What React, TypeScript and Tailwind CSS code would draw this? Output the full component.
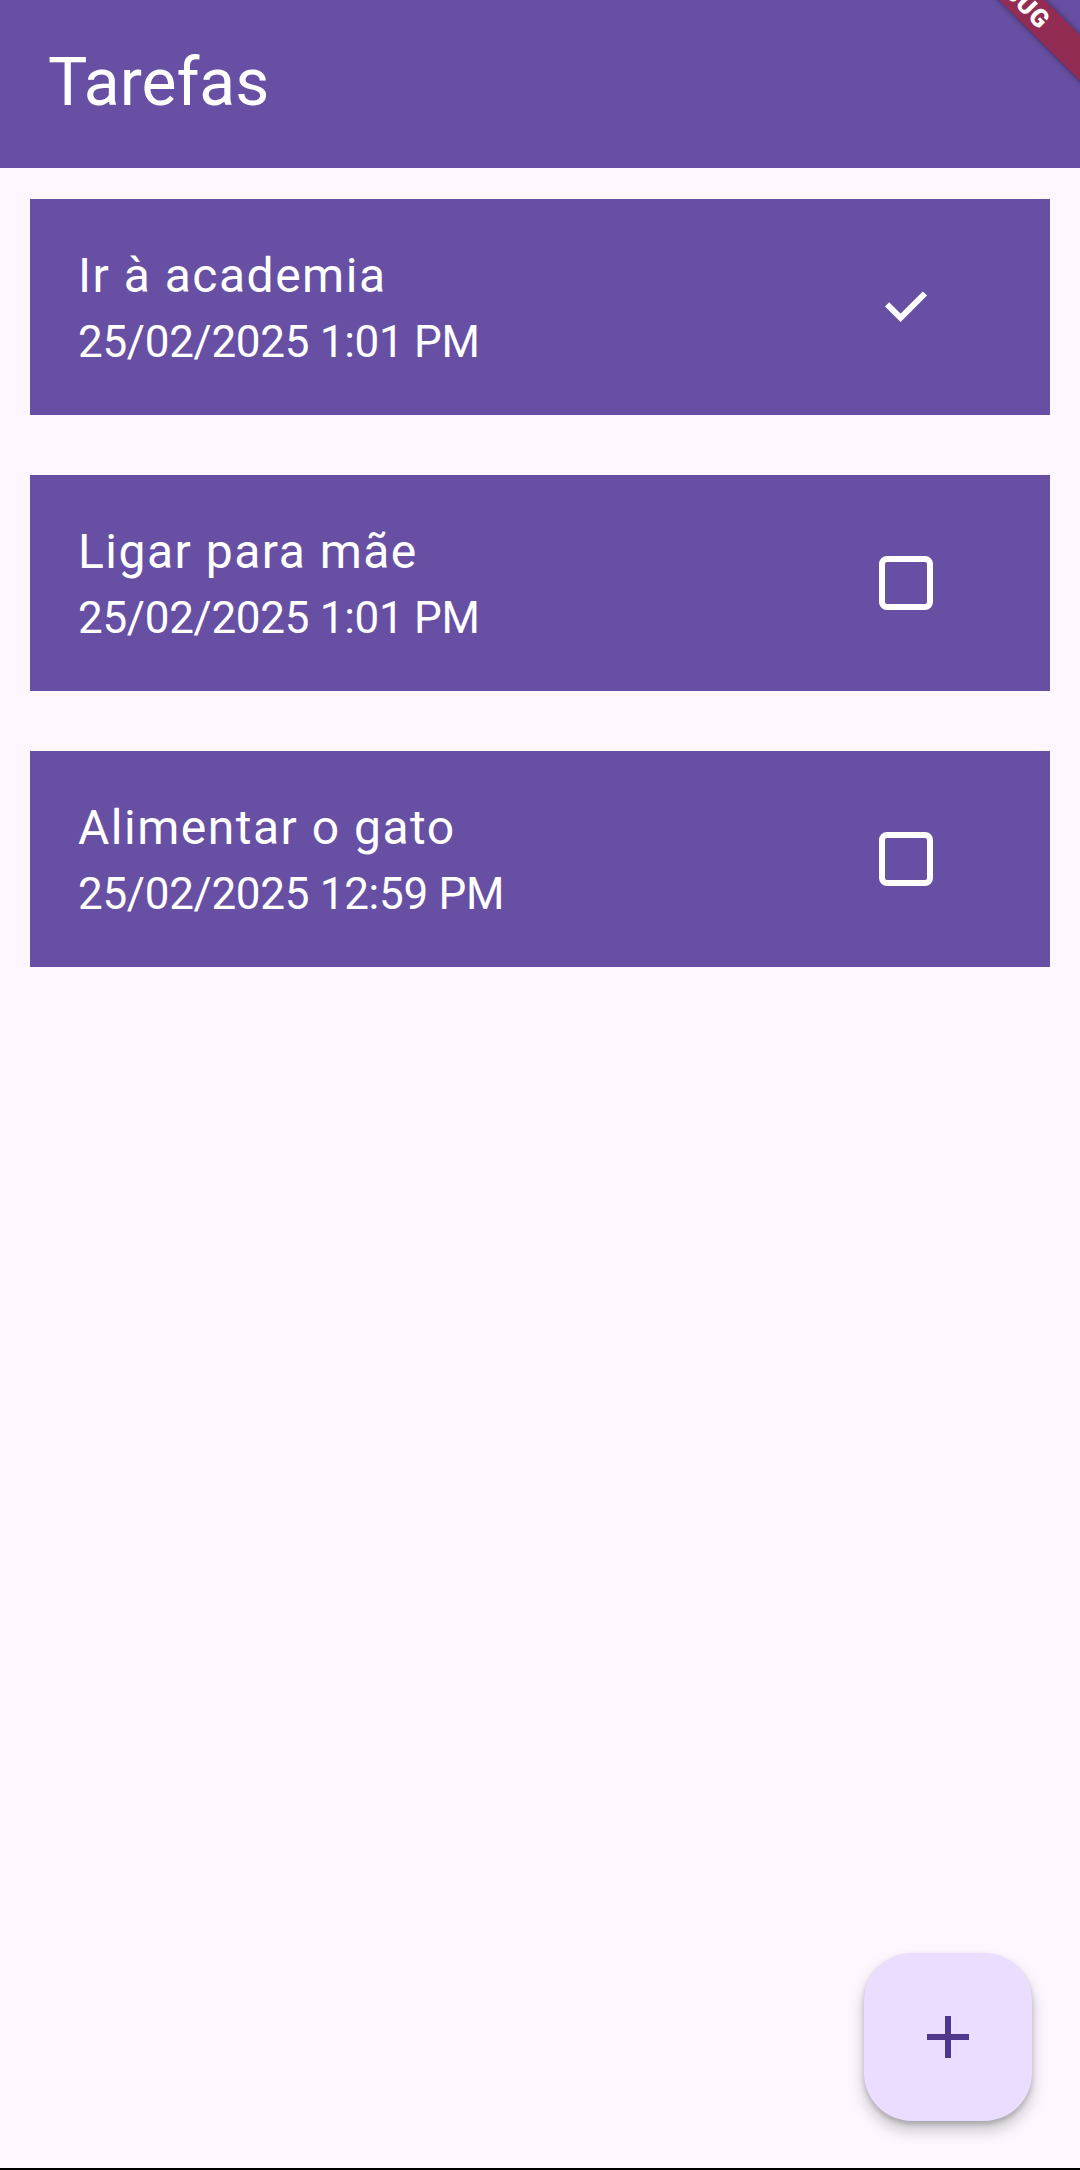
import { useState } from "react";

type Task = { title: string; date: string; done: boolean };

const initialTasks: Task[] = [
  { title: "Ir à academia", date: "25/02/2025 1:01 PM", done: true },
  { title: "Ligar para mãe", date: "25/02/2025 1:01 PM", done: false },
  { title: "Alimentar o gato", date: "25/02/2025 12:59 PM", done: false },
];

function CheckBox({ checked }: { checked: boolean }) {
  if (checked) {
    return (
      <svg width="54" height="54" viewBox="0 0 54 54" className="block">
        <polyline
          points="8.1,24.3 21.6,37.8 45.9,13.5"
          fill="none"
          stroke="white"
          strokeWidth="6"
        />
      </svg>
    );
  }
  return <div className="w-[54px] h-[54px] rounded-[8px] border-[6px] border-white" />;
}

export default function App() {
  const [tasks, setTasks] = useState(initialTasks);

  const toggle = (i: number) =>
    setTasks((t) => t.map((task, idx) => (idx === i ? { ...task, done: !task.done } : task)));

  return (
    <div
      className="relative w-full h-[2170px] flex flex-col bg-[#FEF7FF]"
      style={{ fontFamily: "Roboto, 'Noto Sans', sans-serif" }}
    >
      <header className="relative h-[168px] shrink-0 bg-[#6750A4] overflow-hidden flex items-center pl-[48px] pb-[2px]">
        <h1 className="text-white text-[66px] font-normal leading-none">Tarefas</h1>
        {/* debug banner */}
        <div className="absolute left-[816px] top-[-22px] w-[400px] h-[32px] rotate-45 bg-[rgba(170,26,40,0.66)] shadow-[0_0_6px_rgba(0,0,0,0.45)] flex items-center justify-center">
          <span className="text-white text-[25px] font-black leading-none tracking-[1px]">DEBUG</span>
        </div>
      </header>

      <main className="flex-1 flex flex-col gap-[60px] px-[30px] pt-[31px]">
        {tasks.map((task, i) => (
          <div key={i} className="h-[216px] bg-[#6750A4] flex items-center">
            <div className="flex-1 pl-[48px] pt-[4px] text-white">
              <div className="text-[48px] leading-[65px] tracking-[1.5px]">{task.title}</div>
              <div className="mt-[2px] text-[44px] leading-[65px] tracking-[-0.3px]">{task.date}</div>
            </div>
            <button onClick={() => toggle(i)} className="mr-[117px]">
              <CheckBox checked={task.done} />
            </button>
          </div>
        ))}
      </main>

      <div className="h-[2px] shrink-0 bg-black" />

      <button className="absolute right-[48px] bottom-[49px] w-[168px] h-[168px] rounded-[48px] bg-[#EADDFF] shadow-[0_9px_16px_rgba(0,0,0,0.22),0_3px_5px_rgba(0,0,0,0.18)] flex items-center justify-center">
        <svg width="72" height="72" viewBox="0 0 24 24" fill="#4F378B">
          <path d="M19 13h-6v6h-2v-6H5v-2h6V5h2v6h6v2z" />
        </svg>
      </button>
    </div>
  );
}
